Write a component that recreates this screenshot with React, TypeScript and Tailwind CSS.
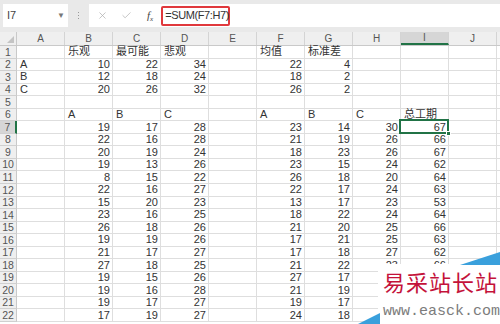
import { X, Check } from "lucide-react";

type Cell = string | number;

const COLS = ["A", "B", "C", "D", "E", "F", "G", "H", "I", "J"];

const sim: number[][] = [
    [19, 17, 28, 23, 14, 30, 67],
    [22, 16, 28, 21, 19, 26, 66],
    [20, 19, 24, 18, 23, 26, 67],
    [19, 13, 26, 23, 15, 24, 62],
    [8, 15, 22, 26, 18, 20, 64],
    [22, 16, 27, 22, 17, 24, 63],
    [15, 20, 23, 13, 17, 23, 53],
    [23, 16, 25, 18, 22, 24, 64],
    [26, 18, 26, 21, 20, 25, 66],
    [19, 19, 26, 17, 21, 25, 63],
    [21, 17, 27, 17, 18, 27, 62],
    [27, 18, 25, 21, 22, 23, 66],
    [19, 15, 26, 27, 17, 26, 70],
    [19, 16, 28, 21, 19, 24, 64],
    [19, 17, 27, 19, 17, 25, 61],
    [17, 19, 27, 24, 18, 26, 68],
];

const rows: Cell[][] = [
    ["", "乐观", "最可能", "悲观", "", "均值", "标准差", "", "", ""],
    ["A", 10, 22, 34, "", 22, 4, "", "", ""],
    ["B", 12, 18, 24, "", 18, 2, "", "", ""],
    ["C", 20, 26, 32, "", 26, 2, "", "", ""],
    ["", "", "", "", "", "", "", "", "", ""],
    ["", "A", "B", "C", "", "A", "B", "C", "总工期", ""],
    ...sim.map((r) => ["", r[0], r[1], r[2], "", r[3], r[4], r[5], r[6], ""] as Cell[]),
];

function Toolbar() {
    return (
        <div className="h-[32px] bg-[#e9e9e9] flex items-start pt-[4px]">
            <div className="ml-[3px] w-[65px] h-[23px] bg-white flex items-center justify-between pl-[4px] pr-[3px] text-[11px] text-[#444]">
                <span>I7</span>
                <span className="text-[8px] text-[#777]">▼</span>
            </div>
            <div className="w-[21px] h-[23px] flex flex-col items-center justify-center gap-[2px]">
                <span className="w-[1px] h-[1px] bg-[#999]" />
                <span className="w-[1px] h-[1px] bg-[#999]" />
                <span className="w-[1px] h-[1px] bg-[#999]" />
            </div>
            <div className="flex-1 h-[23px] bg-white flex items-center">
                <X className="ml-[8px] w-[11px] h-[11px] text-[#aaa]" strokeWidth={1.5} />
                <Check className="ml-[13px] w-[11px] h-[11px] text-[#aaa]" strokeWidth={1.5} />
                <span className="ml-[15px] text-[11px] italic text-[#444] font-['Liberation_Serif',serif]">
                    f<sub className="text-[7px]">x</sub>
                </span>
                <div className="ml-[8px] h-[20px] w-[69px] border-2 border-[#e0383c] rounded-[2px] flex items-center pl-[2px] text-[11px] tracking-[-0.4px] whitespace-nowrap text-[#333]">
                    =SUM(F7:H7)
                </div>
            </div>
        </div>
    );
}

function HeaderRow() {
    return (
        <div className="flex h-[14px] bg-[#efefef] border-b border-[#c9c9c9]">
            <div className="w-[17px] shrink-0 border-r border-[#c9c9c9] relative">
                <div className="absolute right-[2px] bottom-[2px] w-0 h-0 border-l-[7px] border-l-transparent border-b-[7px] border-b-[#c4c4c4]" />
            </div>
            {COLS.map((c) => (
                <div
                    key={c}
                    className={`w-[48px] shrink-0 border-r border-[#d4d4d4] flex items-center justify-center text-[10px] text-[#555] ${c === "I" ? "bg-[#d6d6d6] border-b-2 border-b-[#217346]" : ""}`}
                >
                    {c}
                </div>
            ))}
            <div className="flex-1" />
        </div>
    );
}

export default function App() {
    return (
        <div className="w-[500px] h-[324px] overflow-hidden relative bg-white font-['Liberation_Sans','Noto_Sans_CJK_SC',sans-serif]">
            <Toolbar />
            <HeaderRow />
            {rows.map((row, i) => (
                <div key={i} className="flex h-[12.56px]">
                    <div
                        className={`w-[17px] shrink-0 border-b border-[#d0d0d0] flex items-center justify-center text-[10.5px] leading-none text-[#555] ${i === 6 ? "bg-[#d6d6d6] border-r-2 border-r-[#217346]" : "bg-[#efefef] border-r border-r-[#c9c9c9]"}`}
                    >
                        {i + 1}
                    </div>
                    {row.map((v, j) => (
                        <div
                            key={j}
                            className={`w-[48px] shrink-0 border-r border-b border-[#dedede] flex items-center text-[11px] leading-none text-[#333] ${i === 6 && j === 8 ? "relative" : ""} ${typeof v === "number" ? "justify-end pr-[2px]" : "pl-[3px]"}`}
                        >
                            {v}
                            {i === 6 && j === 8 && (
                                <div className="absolute left-[-2px] top-[-2px] w-[50px] h-[15px] border-2 border-[#217346]">
                                    <div className="absolute right-[-4px] bottom-[-4px] w-[5px] h-[5px] bg-[#217346] border border-white" />
                                </div>
                            )}
                        </div>
                    ))}
                    <div className="flex-1 border-b border-[#dedede]" />
                </div>
            ))}

            {/* watermark */}
            <div className="absolute left-[378px] top-[264px] w-[122px] h-[60px] bg-white z-10">
                <div className="pl-[5px] pt-[6px] text-[22px] leading-none tracking-[1px] text-[#c4123a] font-['Noto_Sans_CJK_SC',serif] whitespace-nowrap">
                    易采站长站
                </div>
                <div className="pl-[5px] pt-[12px] text-[15px] leading-none text-[#7c7c7c] font-['Liberation_Mono',monospace] whitespace-nowrap">
                    www.easck.com
                </div>
            </div>
            <svg className="absolute left-0 top-0 z-20" width="500" height="324">
                <polygon points="460,265 500,265 500,252" fill="#3aa0dc" />
                <polygon points="358,324 380,324 380,313" fill="#3aa0dc" />
            </svg>
        </div>
    );
}
